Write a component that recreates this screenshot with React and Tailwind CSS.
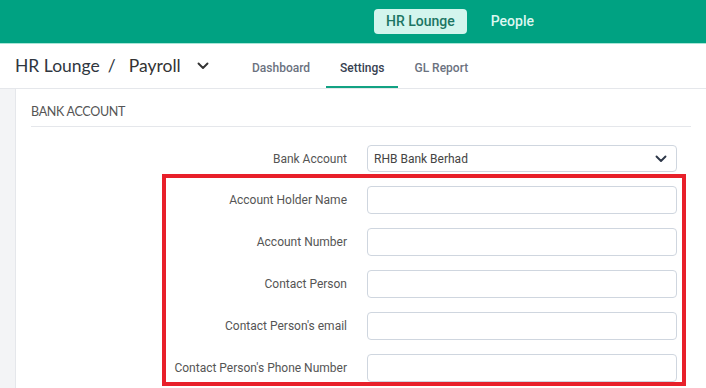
import React from "react";

const rows = [
  "Account Holder Name",
  "Account Number",
  "Contact Person",
  "Contact Person's email",
  "Contact Person's Phone Number",
];

function Chevron({ className }) {
  return (
    <svg viewBox="0 0 12 8" className={className} fill="none" stroke="currentColor" strokeWidth="1.9" strokeLinecap="round" strokeLinejoin="round">
      <path d="M1.5 1.5 6 6l4.5-4.5" />
    </svg>
  );
}

export default function App() {
  return (
    <div className="w-[706px] h-[388px] overflow-hidden bg-white relative" style={{ fontFamily: "Roboto, 'Liberation Sans', sans-serif" }}>
      {/* Top bar */}
      <div className="h-[43px] bg-[#00a282] flex items-center">
        <div className="ml-[374px] h-[25px] px-[12px] rounded-[4px] bg-[#d3f5ed] text-[#1c7563] text-[14px] font-medium flex items-center">HR Lounge</div>
        <div className="ml-[24px] text-[#dcf7f0] text-[14px] font-medium">People</div>
      </div>
      <div className="h-[1px] bg-[#a8e6d7]" />
      {/* Header */}
      <div className="h-[45px] border-b border-[#e5e7eb] flex items-center">
        <div className="ml-[15px] w-[223px] flex items-center text-[17.5px] text-[#2f3640]" style={{ fontFamily: "Lato, 'Liberation Sans', sans-serif" }}>
          <span>HR Lounge</span>
          <span className="ml-[8px]">/</span>
          <span className="ml-[13px] text-[#333]">Payroll</span>
          <Chevron className="ml-[16px] w-[12px] h-[8px] text-[#333]" />
        </div>
        <div className="flex h-full items-stretch text-[12px]">
          <div className="pl-[14px] pr-[16px] flex items-center text-[#6b7280] font-medium pt-[4px]">Dashboard</div>
          <div className="px-[14px] flex items-center text-[#374151] font-medium border-b-[2px] border-[#12a283] pt-[6px]">Settings</div>
          <div className="px-[16px] flex items-center text-[#6b7280] font-medium pt-[4px]">GL Report</div>
        </div>
      </div>
      {/* Body */}
      <div className="flex h-[300px]">
        <div className="w-[16px] bg-[#f3f4f6] border-r border-[#e5e7eb]" />
        <div className="flex-1 px-[15px]">
          <div className="h-[38px] flex items-end pb-[4px] border-b border-[#e5e7eb] text-[12.5px] text-[#555] tracking-[-0.3px]" style={{ fontFamily: "Lato, 'Liberation Sans', sans-serif" }}>
            BANK ACCOUNT
          </div>
          <div className="mt-[18px] flex items-center h-[27px]">
            <div className="w-[316px] text-right text-[12px] text-[#555]">Bank Account</div>
            <div className="ml-[20px] w-[310px] h-[27px] border border-[#cfd6df] rounded-[4px] flex items-center justify-between px-[6px] text-[12px] text-[#444]">
              <span>RHB Bank Berhad</span>
              <Chevron className="w-[12px] h-[8px] text-[#2d3748] mr-[3px]" />
            </div>
          </div>
          <div className="mt-[14px] flex flex-col gap-[14px]">
            {rows.map((r) => (
              <div key={r} className="flex items-center h-[28px]">
                <div className="w-[316px] text-right text-[12px] text-[#555]">{r}</div>
                <div className="ml-[20px] w-[310px] h-[28px] border border-[#cfd6df] rounded-[4px] bg-white" />
              </div>
            ))}
          </div>
        </div>
      </div>
      {/* Red annotation */}
      <div className="absolute left-[162px] top-[174px] w-[524px] h-[212px] border-[4px] border-[#e8202a] pointer-events-none" />
    </div>
  );
}
